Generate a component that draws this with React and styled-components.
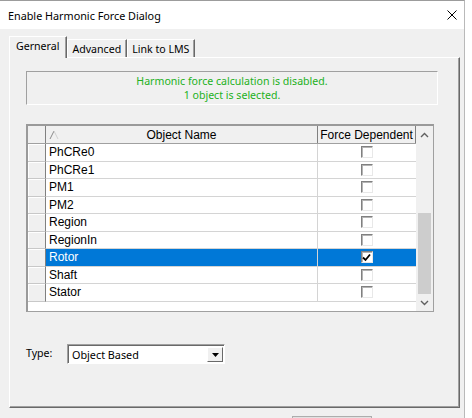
import React from "react";
import styled, { createGlobalStyle } from "styled-components";

const Global = createGlobalStyle`
  html, body { margin: 0; padding: 0; background: #ffffff; }
  body { width: 472px; height: 418px; overflow: hidden; }
`;

const Window = styled.div`
  width: 465px;
  height: 418px;
  box-sizing: border-box;
  border-top: 1px solid #9c9c9c;
  border-right: 1px solid #b9b9b9;
  background: #f0f0f0;
  display: flex;
  flex-direction: column;
  font-family: "Noto Sans", "Liberation Sans", sans-serif;
  color: #000;
`;

const TitleBar = styled.div`
  height: 28px;
  background: #ffffff;
  display: flex;
  align-items: center;
  justify-content: space-between;
  padding: 0 7px 0 8px;
  font-size: 10.8px;
  flex-shrink: 0;
`;

const CloseX = styled.svg`
  width: 10px;
  height: 10px;
`;

const Body = styled.div`
  padding: 7px 5px 0 9px;
  display: flex;
  flex-direction: column;
`;

const TabRow = styled.div`
  display: flex;
  align-items: flex-end;
  height: 21px;
  position: relative;
  z-index: 1;
`;

const Tab = styled.div`
  height: ${(p) => (p.$active ? "22px" : "18px")};
  margin-bottom: ${(p) => (p.$active ? "-1px" : "0")};
  padding: ${(p) => (p.$active ? "2px 7px 0 6px" : "0 5px 0 4px")};
  box-sizing: border-box;
  background: #f0f0f0;
  border-left: 1px solid #ffffff;
  border-top: 1px solid #ffffff;
  border-right: 1px solid #696969;
  box-shadow: inset -1px 0 0 #a0a0a0;
  display: flex;
  align-items: ${(p) => (p.$active ? "flex-start" : "center")};
  font-size: 10.6px;
  white-space: nowrap;
`;

const TabPanel = styled.div`
  width: 451px;
  height: 351px;
  box-sizing: border-box;
  border-left: 1px solid #ffffff;
  border-top: 1px solid #ffffff;
  border-right: 1px solid #696969;
  border-bottom: 1px solid #696969;
  box-shadow: inset -1px -1px 0 #a0a0a0;
  padding: 13px 0 0 16px;
  display: flex;
  flex-direction: column;
`;

const InfoBox = styled.div`
  width: 412px;
  height: 34px;
  box-sizing: border-box;
  border-left: 1px solid #a0a0a0;
  border-top: 1px solid #a0a0a0;
  border-right: 1px solid #ffffff;
  border-bottom: 1px solid #ffffff;
  display: flex;
  flex-direction: column;
  align-items: center;
  justify-content: center;
  color: #22b022;
  font-size: 10.6px;
  line-height: 14px;
`;

const Grid = styled.div`
  margin-top: 19px;
  width: 408px;
  height: 188px;
  box-sizing: border-box;
  border-top: 2px solid #9a9a9a;
  border-left: 2px solid #9a9a9a;
  border-right: 1px solid #a0a0a0;
  border-bottom: 1px solid #a0a0a0;
  display: flex;
  background: #ffffff;
  font-family: "Liberation Sans", Arial, sans-serif;
  font-size: 12px;
`;

const Table = styled.div`
  width: 388px;
  display: flex;
  flex-direction: column;
`;

const HeaderRow = styled.div`
  display: grid;
  grid-template-columns: 18px 272px 98px;
  height: 18px;
  box-sizing: border-box;
  border-bottom: 1px solid #a0a0a0;
  background: #f0f0f0;
`;

const HeaderCell = styled.div`
  box-sizing: border-box;
  border-right: 1px solid #808080;
  display: flex;
  align-items: center;
  justify-content: center;
  position: relative;
  white-space: nowrap;
  color: #000;
`;

const SortGlyph = styled.svg`
  position: absolute;
  left: 3px;
  top: 4px;
  width: 10px;
  height: 10px;
`;

const DataRow = styled.div`
  display: grid;
  grid-template-columns: 18px 272px 98px;
  height: 17.5px;
  box-sizing: border-box;
`;

const RowHead = styled.div`
  background: #f0f0f0;
  box-sizing: border-box;
  border-right: 1px solid #808080;
  border-bottom: 1px solid #c8c8c8;
  box-shadow: inset 1px 1px 0 #ffffff;
`;

const NameCell = styled.div`
  box-sizing: border-box;
  border-right: 1px solid #d4d4d4;
  border-bottom: 1px solid #d4d4d4;
  background: ${(p) => (p.$sel ? "#0078d7" : "#ffffff")};
  color: ${(p) => (p.$sel ? "#ffffff" : "#000000")};
  padding-left: 3px;
  display: flex;
  align-items: center;
  white-space: nowrap;
`;

const CheckCell = styled.div`
  box-sizing: border-box;
  border-bottom: 1px solid #d4d4d4;
  background: ${(p) => (p.$sel ? "#0078d7" : "#ffffff")};
  display: flex;
  align-items: center;
  justify-content: center;
  padding-right: 1px;
`;

const CheckBox = styled.div`
  width: 12px;
  height: 12px;
  box-sizing: border-box;
  background: #ffffff;
  border-left: 1px solid #808080;
  border-top: 1px solid #808080;
  border-right: 1px solid #e8e8e8;
  border-bottom: 1px solid #e8e8e8;
  box-shadow: inset 1px 1px 0 #b4b4b4;
  display: flex;
  align-items: center;
  justify-content: center;
`;

const Filler = styled.div`
  flex: 1;
  background: #ffffff;
`;

const ScrollBar = styled.div`
  width: 17px;
  background: #f0f0f0;
  display: flex;
  flex-direction: column;
  align-items: center;
`;

const ArrowBtn = styled.div`
  height: 17px;
  width: 17px;
  display: flex;
  align-items: center;
  justify-content: center;
  flex-shrink: 0;
`;

const Track = styled.div`
  flex: 1;
  width: 13px;
  display: flex;
  flex-direction: column;
`;

const Thumb = styled.div`
  margin-top: ${(p) => p.$top}px;
  height: ${(p) => p.$h}px;
  background: #cdcdcd;
`;

const TypeRow = styled.div`
  margin-top: 32px;
  display: flex;
  align-items: center;
  font-size: 10.6px;
`;

const TypeLabel = styled.span`
  width: 41px;
  margin-top: -2px;
`;

const Combo = styled.div`
  width: 158px;
  height: 20px;
  box-sizing: border-box;
  border-left: 1px solid #a0a0a0;
  border-top: 1px solid #a0a0a0;
  border-right: 1px solid #ffffff;
  border-bottom: 1px solid #ffffff;
  box-shadow: inset 1px 1px 0 #696969;
  background: #ffffff;
  display: flex;
  align-items: stretch;
  font-size: 10.8px;
`;

const ComboText = styled.div`
  flex: 1;
  display: flex;
  align-items: center;
  padding-left: 4px;
  padding-top: 1px;
`;

const ComboBtn = styled.div`
  width: 16px;
  margin: 2px 1px 1px 0;
  box-sizing: border-box;
  background: #f0f0f0;
  border-left: 1px solid #ffffff;
  border-top: 1px solid #ffffff;
  border-right: 1px solid #696969;
  border-bottom: 1px solid #696969;
  display: flex;
  align-items: center;
  justify-content: center;
`;

const ButtonRow = styled.div`
  display: flex;
  padding-left: 283px;
  padding-top: 8px;
`;

const DlgButton = styled.div`
  width: 80px;
  height: 22px;
  box-sizing: border-box;
  border: 1px solid #adadad;
  background: #e1e1e1;
`;

const items = ["PhCRe0", "PhCRe1", "PM1", "PM2", "Region", "RegionIn", "Rotor", "Shaft", "Stator"];

export default function App() {
  return (
    <>
      <Global />
      <Window>
        <TitleBar>
          <span>Enable Harmonic Force Dialog</span>
          <CloseX viewBox="0 0 10 10">
            <path d="M0.5 0.5 L9.5 9.5 M9.5 0.5 L0.5 9.5" stroke="#000" strokeWidth="1" fill="none" />
          </CloseX>
        </TitleBar>
        <Body>
          <TabRow>
            <Tab $active>Gerneral</Tab>
            <Tab>Advanced</Tab>
            <Tab>Link to LMS</Tab>
          </TabRow>
          <TabPanel>
            <InfoBox>
              <span>Harmonic force calculation is disabled.</span>
              <span>1 object is selected.</span>
            </InfoBox>
            <Grid>
              <Table>
                <HeaderRow>
                  <HeaderCell />
                  <HeaderCell>
                    <SortGlyph viewBox="0 0 10 10">
                      <path d="M1 9 L5 1" stroke="#8a8a8a" strokeWidth="1" fill="none" />
                      <path d="M5 1 L9 9" stroke="#d0d0d0" strokeWidth="1" fill="none" />
                    </SortGlyph>
                    Object Name
                  </HeaderCell>
                  <HeaderCell>Force Dependent</HeaderCell>
                </HeaderRow>
                {items.map((name) => {
                  const sel = name === "Rotor";
                  return (
                    <DataRow key={name}>
                      <RowHead />
                      <NameCell $sel={sel}>{name}</NameCell>
                      <CheckCell $sel={sel}>
                        <CheckBox>
                          {sel && (
                            <svg width="9" height="9" viewBox="0 0 9 9">
                              <path d="M1 4.5 L3.5 7 L8 1.5" stroke="#000" strokeWidth="1.8" fill="none" />
                            </svg>
                          )}
                        </CheckBox>
                      </CheckCell>
                    </DataRow>
                  );
                })}
                <Filler />
              </Table>
              <ScrollBar>
                <ArrowBtn>
                  <svg width="9" height="6" viewBox="0 0 9 6">
                    <path d="M1 5 L4.5 1.5 L8 5" stroke="#606060" strokeWidth="1.4" fill="none" />
                  </svg>
                </ArrowBtn>
                <Track>
                  <Thumb $top={70} $h={81} />
                </Track>
                <ArrowBtn>
                  <svg width="9" height="6" viewBox="0 0 9 6">
                    <path d="M1 1 L4.5 4.5 L8 1" stroke="#606060" strokeWidth="1.4" fill="none" />
                  </svg>
                </ArrowBtn>
              </ScrollBar>
            </Grid>
            <TypeRow>
              <TypeLabel>Type:</TypeLabel>
              <Combo>
                <ComboText>Object Based</ComboText>
                <ComboBtn>
                  <svg width="7" height="4" viewBox="0 0 7 4">
                    <path d="M0 0 L7 0 L3.5 4 Z" fill="#000" />
                  </svg>
                </ComboBtn>
              </Combo>
            </TypeRow>
          </TabPanel>
          <ButtonRow>
            <DlgButton />
          </ButtonRow>
        </Body>
      </Window>
    </>
  );
}
